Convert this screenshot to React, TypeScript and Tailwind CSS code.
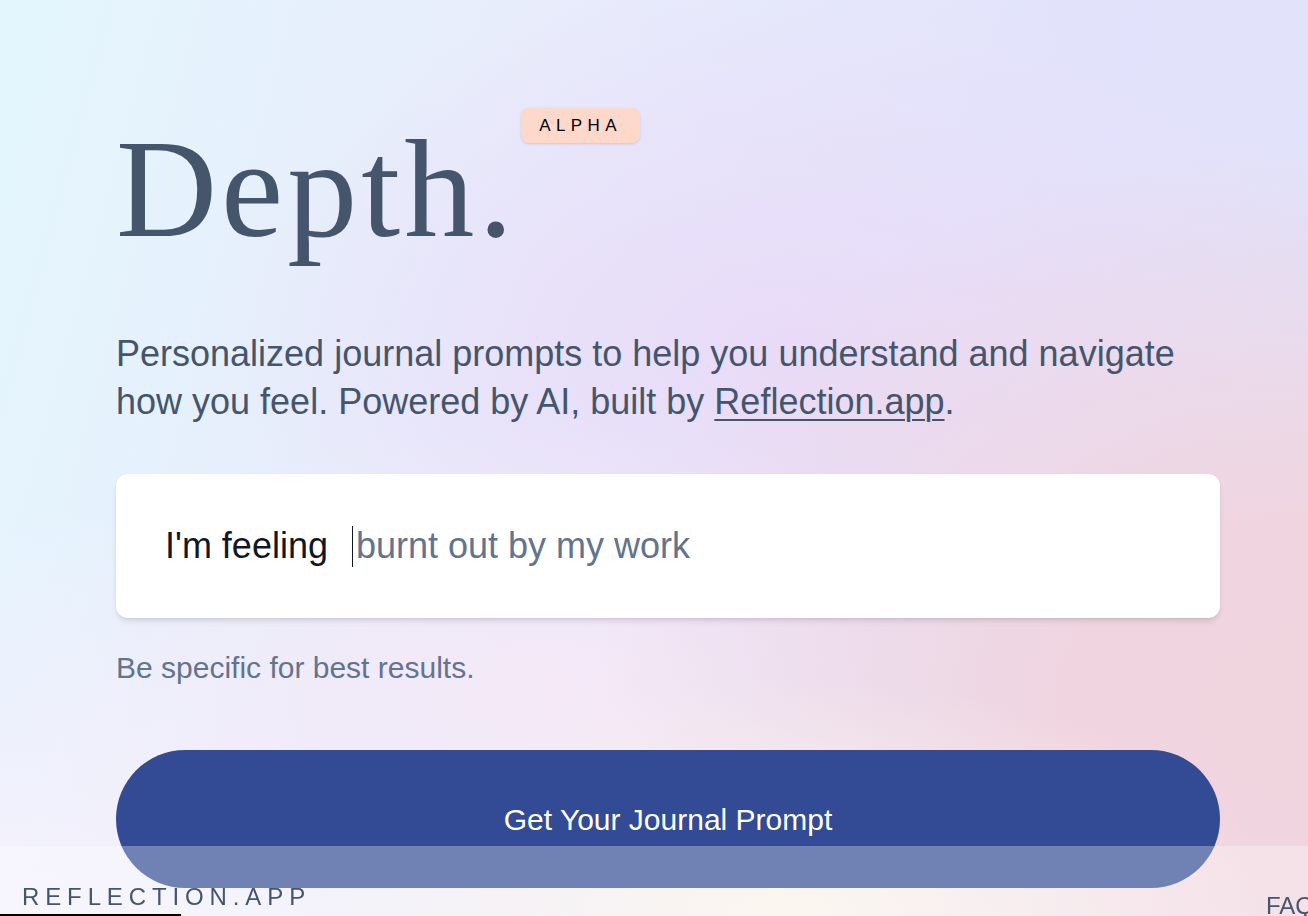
import React from "react";

const sans = "font-['Liberation_Sans','Arial',sans-serif]";

export default function App() {
  return (
    <div
      className={`relative h-screen w-full overflow-hidden ${sans} bg-[radial-gradient(ellipse_38%_26%_at_60%_100%,#fbf3ea_0%,rgba(251,243,234,0)_100%),radial-gradient(ellipse_55%_62%_at_100%_78%,#f0d4de_0%,#f0d5e0_35%,rgba(240,213,224,0)_100%),radial-gradient(ellipse_40%_30%_at_42%_76%,#f5e9f7_0%,rgba(245,233,247,0)_100%),radial-gradient(ellipse_45%_40%_at_60%_38%,#e9dbf8_0%,rgba(233,219,248,0)_100%),radial-gradient(ellipse_50%_45%_at_0%_100%,#f5f1fc_0%,rgba(245,241,252,0)_100%),linear-gradient(105deg,#e3f6fd_0%,#e8ecfb_35%,#e2e3fb_70%,#e0e1fa_100%)]`}
    >
      <main className="ml-[116px] w-[1104px] pt-[109px]">
        <div className="flex items-start">
          <h1 className="mt-[10px] font-['Liberation_Serif','Times_New_Roman',serif] text-[140px] leading-none tracking-[4px] text-slate-600">
            Depth.
          </h1>
          <span className="ml-[4px] -mt-px rounded-lg bg-[#fed8ca] px-[18px] py-[8px] text-[17px] leading-[19px] tracking-[0.32em] text-black shadow-sm">
            ALPHA
          </span>
        </div>

        <p className="mt-[71px] text-[36px] leading-[48px] text-slate-600">
          Personalized journal prompts to help you understand and navigate how you feel. Powered by AI, built by{" "}
          <a href="#" className="underline decoration-[2px] underline-offset-[5px]">
            Reflection.app
          </a>
          .
        </p>

        <div className="mt-12 flex h-[144px] items-center rounded-xl bg-white px-[49px] shadow-md">
          <span className="text-[36px] text-gray-900">I'm feeling</span>
          <span className="ml-[24px] h-[41px] w-px bg-gray-900" />
          <input
            type="text"
            placeholder="burnt out by my work"
            className="ml-[3px] flex-1 bg-transparent text-[36px] text-gray-900 outline-none placeholder:text-slate-500"
          />
        </div>

        <p className="mt-8 text-[30px] leading-[36px] text-slate-500">Be specific for best results.</p>

        <button className="mt-16 flex h-[138px] w-full items-center justify-center rounded-full bg-[#334b94] text-[30px] text-white">
          Get Your Journal Prompt
        </button>
      </main>

      <footer className="fixed inset-x-0 bottom-0 h-[70px] overflow-hidden bg-white/30">
        <div className="flex w-[1336px] items-start justify-between px-[22px]">
          <span className="mt-[39px] text-[24px] leading-none tracking-[0.245em] text-slate-600">REFLECTION.APP</span>
          <span className="mt-[48px] text-[24px] leading-none text-slate-600">FAQ</span>
        </div>
        <div className="absolute bottom-0 left-0 h-[2px] w-[181px] bg-black" />
      </footer>
    </div>
  );
}
